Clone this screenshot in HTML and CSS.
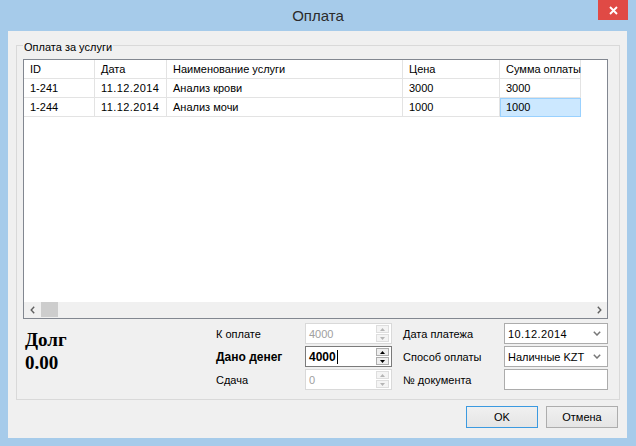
FILE: index.html
```html
<!DOCTYPE html>
<html>
<head>
<meta charset="utf-8">
<link rel="stylesheet" href="styles.css">
</head>
<body>
<div class="window">
  <div class="titlebar">
    <div class="title">Оплата</div>
    <div class="close"><svg width="9" height="9" viewBox="0 0 9 9"><path d="M1 1 L8 8 M8 1 L1 8" stroke="#fff" stroke-width="1.9"/></svg></div>
  </div>
  <div class="client">
    <fieldset class="group">
      <legend>Оплата за услуги</legend>
      <div class="grid">
        <div class="grid-body">
          <div class="row">
            <div class="cell c1">ID</div>
            <div class="cell c2">Дата</div>
            <div class="cell c3">Наименование услуги</div>
            <div class="cell c4">Цена</div>
            <div class="cell c5">Сумма оплаты</div>
          </div>
          <div class="row">
            <div class="cell c1">1-241</div>
            <div class="cell c2 date">11.12.2014</div>
            <div class="cell c3">Анализ крови</div>
            <div class="cell c4">3000</div>
            <div class="cell c5">3000</div>
          </div>
          <div class="row">
            <div class="cell c1">1-244</div>
            <div class="cell c2 date">11.12.2014</div>
            <div class="cell c3">Анализ мочи</div>
            <div class="cell c4">1000</div>
            <div class="cell c5 selected">1000</div>
          </div>
        </div>
        <div class="hscroll">
          <div class="sarrow"><svg width="5" height="8" viewBox="0 0 5 8"><path d="M4.2 0.8 L1.2 4 L4.2 7.2" fill="none" stroke="#606060" stroke-width="1.4"/></svg></div>
          <div class="thumb"></div>
          <div class="track"></div>
          <div class="sarrow"><svg width="5" height="8" viewBox="0 0 5 8"><path d="M0.8 0.8 L3.8 4 L0.8 7.2" fill="none" stroke="#606060" stroke-width="1.4"/></svg></div>
        </div>
      </div>
      <div class="form">
        <div class="debt">
          <div>Долг</div>
          <div>0.00</div>
        </div>
        <div class="lbl r1">К оплате</div>
        <div class="spin r1 disabled">
          <div class="val">4000</div>
          <div class="spin-btns">
            <div class="sb"><svg width="5" height="3" viewBox="0 0 5 3"><path d="M0 3 L2.5 0 L5 3Z"/></svg></div>
            <div class="sb"><svg width="5" height="3" viewBox="0 0 5 3"><path d="M0 0 L2.5 3 L5 0Z"/></svg></div>
          </div>
        </div>
        <div class="lbl2 r1">Дата платежа</div>
        <div class="combo r1"><span class="date">10.12.2014</span><svg width="8" height="5" viewBox="0 0 8 5"><path d="M0.8 0.8 L4 4 L7.2 0.8" fill="none" stroke="#777" stroke-width="1.5"/></svg></div>

        <div class="lbl r2 bold">Дано денег</div>
        <div class="spin r2 active">
          <div class="val">4000<span class="caret"></span></div>
          <div class="spin-btns">
            <div class="sb"><svg width="5" height="3" viewBox="0 0 5 3"><path d="M0 3 L2.5 0 L5 3Z"/></svg></div>
            <div class="sb"><svg width="5" height="3" viewBox="0 0 5 3"><path d="M0 0 L2.5 3 L5 0Z"/></svg></div>
          </div>
        </div>
        <div class="lbl2 r2">Способ оплаты</div>
        <div class="combo r2"><span>Наличные KZT</span><svg width="8" height="5" viewBox="0 0 8 5"><path d="M0.8 0.8 L4 4 L7.2 0.8" fill="none" stroke="#777" stroke-width="1.5"/></svg></div>

        <div class="lbl r3">Сдача</div>
        <div class="spin r3 disabled">
          <div class="val">0</div>
          <div class="spin-btns">
            <div class="sb"><svg width="5" height="3" viewBox="0 0 5 3"><path d="M0 3 L2.5 0 L5 3Z"/></svg></div>
            <div class="sb"><svg width="5" height="3" viewBox="0 0 5 3"><path d="M0 0 L2.5 3 L5 0Z"/></svg></div>
          </div>
        </div>
        <div class="lbl2 r3">№ документа</div>
        <div class="combo r3"></div>
      </div>
    </fieldset>
    <div class="buttons">
      <div class="btn default">OK</div>
      <div class="btn">Отмена</div>
    </div>
  </div>
</div>
</body>
</html>
```

FILE: styles.css
```css
* { box-sizing: border-box; }
html, body { margin: 0; padding: 0; }
body {
  width: 636px;
  height: 446px;
  overflow: hidden;
  font-family: "Liberation Sans", Arial, sans-serif;
  font-size: 11px;
  color: #000;
}
.window {
  width: 636px;
  height: 446px;
  background: #a6cbea;
  display: flex;
  flex-direction: column;
}
.titlebar {
  height: 31px;
  display: flex;
  padding: 0 8px 0 38px;
}
.title {
  flex: 1;
  text-align: center;
  font-size: 15px;
  line-height: 32px;
  color: #2b2b2b;
}
.close {
  width: 30px;
  height: 20px;
  background: #e04a45;
  display: flex;
  align-items: center;
  justify-content: center;
}
.client {
  margin: 0 9px 0 8px;
  height: 407px;
  background: #f0f0f0;
  display: flex;
  flex-direction: column;
}
.group {
  margin: 6px 7px 0 8px;
  padding: 5px 11px 9px 6px;
  border: 1px solid #d9d9d9;
  min-width: 0;
}
.group legend {
  padding: 3px 1px 0;
  font-size: 11px;
  line-height: 14px;
}
.grid {
  height: 260px;
  border: 1px solid #828790;
  background: #fff;
  display: flex;
  flex-direction: column;
}
.grid-body { flex: 1; }
.row { display: flex; height: 19px; }
.cell {
  height: 19px;
  border-right: 1px solid #e3e3e3;
  border-bottom: 1px solid #e3e3e3;
  padding-left: 6px;
  line-height: 18px;
  white-space: nowrap;
}
.date { letter-spacing: 0.4px; }
.c1 { width: 71px; }
.c2 { width: 72px; }
.c3 { width: 236px; }
.c4 { width: 97px; }
.c5 { width: 81px; }
.cell.selected {
  background: #cce8ff;
  border-color: #99d1ff;
  box-shadow: inset 1px 1px 0 #99d1ff;
}
.hscroll {
  height: 16px;
  display: flex;
  background: #f0f0f0;
}
.sarrow {
  width: 16px;
  display: flex;
  align-items: center;
  justify-content: center;
}
.thumb {
  width: 17px;
  margin: 0 0 1px 1px;
  background: #cdcdcd;
}
.track { flex: 1; }
.form {
  display: grid;
  grid-template-columns: 192px 90px 87px 112px 104px;
  grid-template-rows: 21px 21px 21px;
  row-gap: 2px;
  margin-top: 4px;
}
.debt {
  grid-column: 1;
  grid-row: 1 / 4;
  padding: 5px 0 0 2px;
  font-family: "Liberation Serif", "Times New Roman", serif;
  font-weight: bold;
  font-size: 19px;
  line-height: 23px;
}
.r1 { grid-row: 1; }
.r2 { grid-row: 2; }
.r3 { grid-row: 3; }
.lbl {
  grid-column: 2;
  padding-left: 1px;
  display: flex;
  align-items: center;
}
.lbl.bold { font-weight: bold; font-size: 12px; }
.lbl2 {
  grid-column: 4;
  padding-left: 11px;
  display: flex;
  align-items: center;
}
.spin {
  grid-column: 3;
  display: flex;
  align-items: center;
  border: 1px solid #d9d9d9;
  background: #fff;
  padding-left: 3px;
}
.spin .val { flex: 1; display: flex; align-items: center; }
.spin.disabled .val { color: #a0a0a0; }
.spin.active { border-color: #7a7a7a; }
.spin.active .val { font-weight: bold; font-size: 12px; }
.caret {
  display: inline-block;
  width: 1px;
  height: 14px;
  background: #000;
  margin-left: 1px;
}
.spin-btns {
  width: 13px;
  margin-right: 2px;
  display: flex;
  flex-direction: column;
  gap: 1px;
}
.sb {
  height: 8px;
  border: 1px solid #dedede;
  background: #f4f4f4;
  display: flex;
  align-items: center;
  justify-content: center;
}
.spin.disabled .sb svg { fill: #b5b5b5; }
.spin.active .sb { border-color: #adadad; background: #eeeeee; }
.spin.active .sb svg { fill: #000; }
.combo {
  grid-column: 5;
  display: flex;
  align-items: center;
  justify-content: space-between;
  border: 1px solid #acacac;
  background: #fff;
  padding: 0 6px 0 3px;
}
.buttons {
  display: flex;
  justify-content: flex-end;
  gap: 8px;
  margin-top: 6px;
  padding-right: 9px;
}
.btn {
  width: 72px;
  height: 22px;
  border: 1px solid #adadad;
  background: linear-gradient(#f0f0f0, #e5e5e5);
  display: flex;
  align-items: center;
  justify-content: center;
}
.btn.default { border-color: #3c9ae0; }
```
